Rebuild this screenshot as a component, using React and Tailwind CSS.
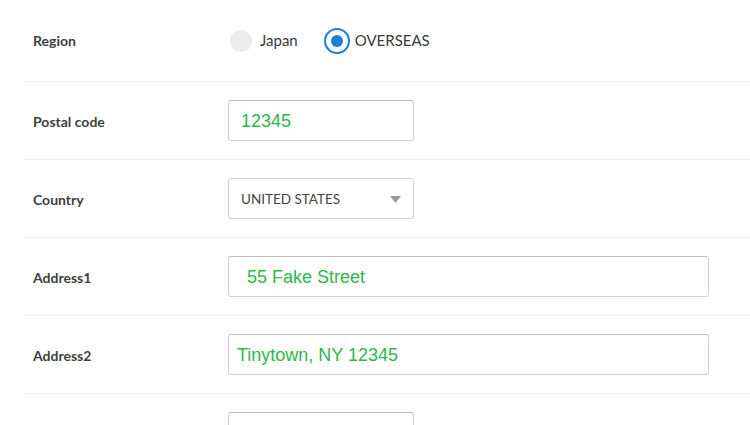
import { useState } from "react"

const labelCls =
  "w-[204px] shrink-0 pl-[9px] text-[14px] font-bold text-[#3f3f3f] font-['Lato','Liberation_Sans',sans-serif]"

function Row({ label, tall, children }) {
  return (
    <div
      className={`flex items-center border-b border-[#efefef] ${
        tall ? "h-[82px]" : "h-[78px]"
      }`}
    >
      <div className={labelCls + (tall ? "" : " pt-[2px]")}>{label}</div>
      {children}
    </div>
  )
}

function TextBox({ value, wide, pad }) {
  return (
    <div
      className={`h-[41px] ${
        wide ? "w-[481px]" : "w-[186px]"
      } rounded-[3px] border border-[#cfcfcf] border-t-[#bdbdbd] bg-white flex items-center pt-[1px] ${pad} text-[18px] text-[#2cb84a] font-['Liberation_Sans',Arial,sans-serif]`}
    >
      {value}
    </div>
  )
}

export default function App() {
  const [region, setRegion] = useState("overseas")

  return (
    <div className="w-[750px] h-[425px] overflow-hidden bg-white pl-6">
      <Row label="Region" tall>
        <div className="flex items-center font-['Lato','Liberation_Sans',sans-serif] text-[15px] text-[#3a3a3a]">
          <button
            className="flex items-center"
            onClick={() => setRegion("japan")}
          >
            <span className="w-[22px] h-[22px] rounded-full bg-[#ececec] ml-[2px]" />
            <span className="ml-[8px]">Japan</span>
          </button>
          <button
            className="flex items-center ml-[26px]"
            onClick={() => setRegion("overseas")}
          >
            <span className="w-[26px] h-[26px] rounded-full border-2 border-[#1a7fd8] flex items-center justify-center">
              {region === "overseas" && (
                <span className="w-[12px] h-[12px] rounded-full bg-[#1a7fd8]" />
              )}
            </span>
            <span className="ml-[5px]">OVERSEAS</span>
          </button>
        </div>
      </Row>

      <Row label="Postal code">
        <TextBox value="12345" pad="pl-[12px]" />
      </Row>

      <Row label="Country">
        <div className="h-[41px] w-[186px] rounded-[3px] border border-[#cfcfcf] bg-white flex items-center justify-between pt-[1px] pl-[12px] pr-[12px] text-[13.5px] text-[#444] font-['Lato','Liberation_Sans',sans-serif]">
          <span>UNITED STATES</span>
          <svg width="11" height="7" viewBox="0 0 11 7">
            <path d="M0 0 L11 0 L5.5 7 Z" fill="#9a9a9a" />
          </svg>
        </div>
      </Row>

      <Row label="Address1">
        <TextBox value="55 Fake Street" wide pad="pl-[18px]" />
      </Row>

      <Row label="Address2">
        <TextBox value="Tinytown, NY 12345" wide pad="pl-[8px]" />
      </Row>

      <div className="flex items-start pt-[18px]">
        <div className={labelCls}></div>
        <div className="h-[41px] w-[186px] rounded-[3px] border border-[#cfcfcf] border-t-[#bdbdbd] bg-white" />
      </div>
    </div>
  )
}
